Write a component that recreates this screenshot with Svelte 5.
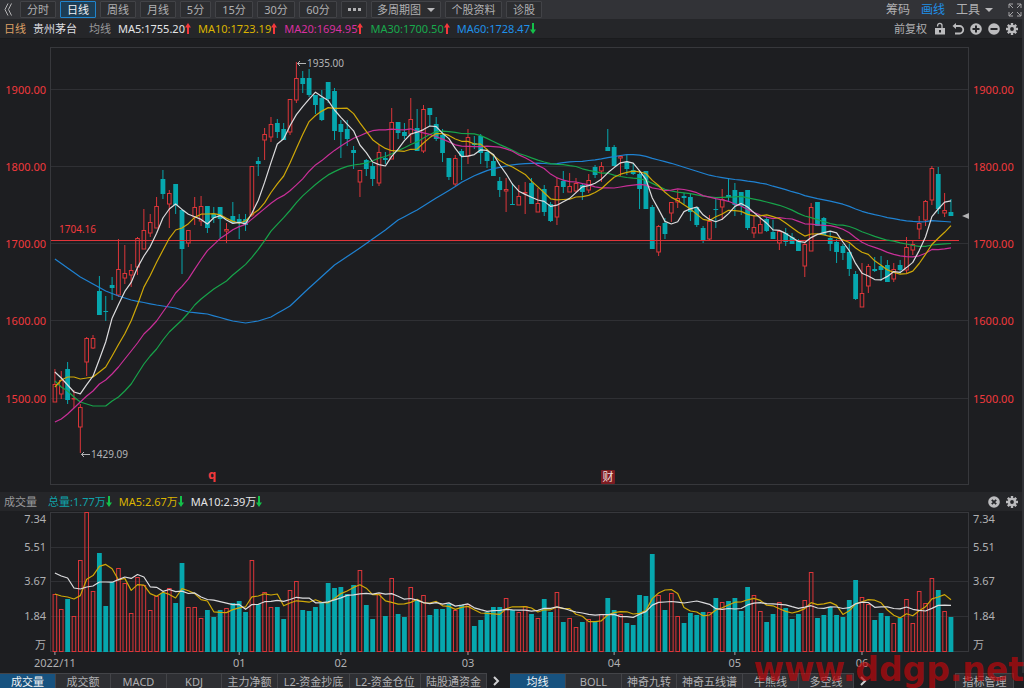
<script>
  const periods = ['分时', '日线', '周线', '月线', '5分', '15分', '30分', '60分'];
  let period = $state('日线');
  let volumeTab = $state('成交量');
  let priceTab = $state('均线');

  const averages = [
    { text: 'MA5:1755.20', color: '#e4e4e6', up: true },
    { text: 'MA10:1723.19', color: '#dbb400', up: true },
    { text: 'MA20:1694.95', color: '#d930a0', up: true },
    { text: 'MA30:1700.50', color: '#18a94c', up: true },
    { text: 'MA60:1728.47', color: '#2090e8', up: false }
  ];
  const volumeLegend = [
    { text: '总量:1.77万', color: '#0fa3ab' },
    { text: 'MA5:2.67万', color: '#dbb400' },
    { text: 'MA10:2.39万', color: '#e4e4e6' }
  ];
  const volumeTabs = [
    ['成交量', 56], ['成交额', 55], ['MACD', 56], ['KDJ', 55], ['主力净额', 56],
    ['L2-资金抄底', 72], ['L2-资金仓位', 71], ['陆股通资金', 66]
  ];
  const priceTabs = [
    ['均线', 56], ['BOLL', 56], ['神奇九转', 55], ['神奇五线谱', 66], ['牛熊线', 56], ['多空线', 55]
  ];

  // One candle per entry: direction, body top, body bottom, high, low, volume top
  const raw = `r384 402 369 402 594,r380 394 371 399 609,t369 400 362 404 599,r398 399 390 408 616,r407 427 404 453 560,
r338 362 337 376 512,r338 348 335 349 591,t291 315 276 315 553,t311 312 296 321 606,t285 288 277 300 582,
r269 295 239 297 568,r273 278 245 284 583,r270 275 264 287 613,r238 267 237 275 577,r230 249 209 249 585,
r222 233 214 237 610,r206 228 197 228 596,t179 194 170 199 593,r193 204 190 228 588,t184 205 184 214 603,
t210 249 209 274 563,r230 243 230 247 607,r207 217 197 225 607,r206 221 196 226 618,t206 228 206 233 610,
t214 218 207 223 617,t207 219 207 238 610,r229 231 223 243 608,t216 223 202 223 603,t219 223 214 239 601,
t219 225 214 231 612,r166 215 166 217 560,t161 164 157 176 604,r134 140 128 160 592,r124 137 117 142 607,
t123 132 119 138 607,t129 140 123 140 619,r99 132 99 135 590,r78 100 62 103 581,t78 84 71 93 610,
t78 95 69 97 611,t95 105 95 114 607,t98 120 90 121 603,t82 99 82 103 583,t91 131 88 140 588,
t124 132 120 158 587,t129 139 120 146 594,t150 153 146 169 585,r170 182 170 197 570,t160 169 159 176 605,
t166 179 163 186 619,r152 183 144 186 594,t158 160 152 164 616,r122 159 108 159 578,t122 133 122 139 614,
t132 136 123 139 617,r119 134 98 143 587,t128 151 109 151 601,r109 151 105 153 595,t108 115 108 126 615,
t124 139 117 141 609,t135 153 129 162 609,t158 177 158 180 604,r158 184 155 186 610,t151 156 149 180 605,
r137 156 129 164 604,t143 145 136 149 626,t136 153 134 164 620,t152 161 149 168 612,t161 176 155 176 607,
t181 190 177 197 607,r189 191 178 212 598,t204 205 183 205 610,r196 205 185 205 612,r192 193 182 214 606,
t183 204 178 204 614,r203 212 188 212 618,t189 212 185 216 599,t204 221 202 222 612,r186 217 177 225 592,
t181 187 171 193 622,r186 192 173 192 618,r183 191 178 193 627,t185 192 183 200 622,r180 190 174 193 619,
t167 175 165 178 622,r166 171 162 182 614,t147 151 129 151 598,t147 166 145 166 610,r156 158 155 176 614,
t162 169 155 175 623,t170 174 163 175 625,t174 189 172 209 595,t171 209 171 209 596,t207 249 205 249 554,
r226 252 225 256 595,t223 234 218 239 610,r202 213 202 222 593,r198 202 190 208 616,t196 198 193 204 623,
t197 212 193 221 613,t207 225 207 227 615,t228 241 226 243 612,r221 239 215 241 612,t209 210 199 228 598,
r199 207 189 220 602,t195 197 178 201 601,t190 205 183 216 598,t192 206 192 215 611,t190 228 190 230 587,
r227 233 215 238 595,r224 233 217 233 611,t219 231 217 232 622,t232 239 220 239 614,r231 243 231 250 602,
t233 242 228 246 608,t237 244 233 244 619,t241 251 239 251 614,r244 266 242 277 600,r207 251 203 251 572,
t202 226 202 226 618,t218 235 217 235 615,t238 244 232 251 607,t242 252 239 263 615,t246 253 244 260 617,
t252 269 244 276 600,t274 299 271 300 580,r293 307 263 307 597,r266 286 264 293 604,t269 271 257 272 620,
t266 270 256 281 613,t265 282 260 282 616,r269 279 263 282 623,t265 270 260 274 618,r247 270 237 273 599,
r244 250 241 255 623,r223 229 216 239 591,r201 220 200 226 603,r168 200 166 205 578,t174 209 167 214 590,
r210 213 193 217 611,t212 216 199 216 617`;

  const candles = raw.split(',').map((entry, i) => {
    const s = entry.trim();
    const [top, bottom, high, low, vol] = s.slice(1).split(' ').map(Number);
    const up = s[0] === 'r';
    return { x: 54.9 + i * 6.355, up, top, bottom, high, low, vol, close: up ? top : bottom };
  });

  // Averages that need sessions older than the first candle start from known values
  function average(key, n, seed) {
    return candles
      .map((c, i) => {
        if (i < seed.length) return [c.x, seed[i]];
        let sum = 0;
        for (let k = i - n + 1; k <= i; k++) sum += candles[k][key];
        return [c.x, sum / n];
      })
      .map((p) => p[0].toFixed(1) + ',' + p[1].toFixed(1))
      .join(' ');
  }

  function interpolate(knots) {
    const out = [];
    for (let k = 0; k < knots.length - 1; k++) {
      const [a, ya] = knots[k];
      const [b, yb] = knots[k + 1];
      for (let i = a; i < b; i++) out.push(ya + ((yb - ya) * (i - a)) / (b - a));
    }
    return out;
  }

  const seed20 = [422, 419, 414, 408, 402, 396, 391, 384, 380, 374, 367, 359, 351, 343, 334, 328, 321, 312, 303];
  const seed30 = [381, 387, 391, 397, 402, 404, 406, 406, 406, 401, 397, 391, 384, 374, 364, 356, 349, 340, 332, 326, 320, 313, 305, 299, 294, 289, 285, 281, 275];
  const seed60 = interpolate([[0, 259], [4, 277], [8, 291], [10, 296], [12, 300], [16, 305], [19, 308], [21, 312], [24, 314], [28, 321], [30, 323], [32, 321], [34, 317], [37, 306], [40, 288], [44, 265], [48, 248], [52, 230], [54, 220], [57, 210], [59, 202]]);

  const priceLines = [
    { color: '#1f82d2', points: average('close', 60, seed60) },
    { color: '#17a34a', points: average('close', 30, seed30) },
    { color: '#c92f98', points: average('close', 20, seed20) },
    { color: '#cfa808', points: average('close', 10, [387, 380, 377, 377, 379, 378, 377, 372, 367]) },
    { color: '#dcdcde', points: average('close', 5, [372, 378, 385, 392]) }
  ];
  const volumeLines = [
    { color: '#cfa808', points: average('vol', 5, [594, 596, 597, 599]) },
    { color: '#dcdcde', points: average('vol', 10, [573, 576, 578, 588, 589, 587, 586, 582, 582]) }
  ];

  const priceTicks = [['1900.00', 90], ['1800.00', 167], ['1700.00', 244], ['1600.00', 321], ['1500.00', 399]];
  const volumeTicks = [['7.34', 519], ['5.51', 547], ['3.67', 581], ['1.84', 616], ['万', 645]];
  const months = [['2022/11', 0], ['01', 29], ['02', 45], ['03', 65], ['04', 88], ['05', 107], ['06', 127]];
</script>

{#snippet arrow(up)}
  <svg class="arrow" viewBox="0 0 6 12" aria-hidden="true">
    {#if up}
      <path d="M3 0 6 4.500H4V11H2V4.500H0Z" fill="#f5383c" />
    {:else}
      <path d="M3 11 6 6.500H4V0H2V6.500H0Z" fill="#14c04a" />
    {/if}
  </svg>
{/snippet}

{#snippet gear()}
  <svg viewBox="0 0 14 14" aria-hidden="true">
    <g stroke="#bcbcbe" stroke-width="2.4">
      <path d="M7 1V13M1 7H13M2.800 2.800 11.200 11.200M11.200 2.800 2.800 11.200" />
    </g>
    <circle cx="7" cy="7" r="4.200" fill="#bcbcbe" />
    <circle cx="7" cy="7" r="1.900" fill="#252629" />
  </svg>
{/snippet}

{#snippet tabs(items, current, choose)}
  {#each items as [name, width]}
    <button class="tab" class:active={current === name} style="flex-basis:{width}px" onclick={() => choose(name)}>{name}</button>
  {/each}
{/snippet}

<div class="app">
  <header class="toolbar">
    <button class="plain back" aria-label="收起">
      <svg viewBox="0 0 8 13" aria-hidden="true"><path d="M4 .5 1 6.500 4 12.500M7.500 .5 4.500 6.500 7.500 12.500" fill="none" stroke="#b4b4b6" /></svg>
    </button>
    <nav class="periods">
      {#each periods as name, i}
        <button class="chip" class:mid={i === 4} class:wide={i > 4} class:active={period === name} onclick={() => (period = name)}>{name}</button>
      {/each}
      <button class="chip dots" aria-label="更多周期"><i></i><i></i><i></i></button>
      <button class="chip multi">多周期图<span class="caret"></span></button>
      <button class="chip info">个股资料</button>
      <button class="chip">诊股</button>
    </nav>
    <nav class="tools">
      <button class="plain">筹码</button>
      <button class="plain blue">画线</button>
      <button class="plain">工具<span class="caret"></span></button>
      <button class="plain" aria-label="全屏">
        <svg class="expand" viewBox="0 0 14 14" aria-hidden="true">
          <path d="M1 5V1H5M1 1 5 5M9 1H13V5M13 1 9 5M1 9V13H5M1 13 5 9M13 9V13H9M13 13 9 9" fill="none" stroke="#a4a4a6" />
        </svg>
      </button>
    </nav>
  </header>

  <main class="workspace">
    <div class="legend price-legend">
      <span class="kind">日线</span>
      <span class="stock">贵州茅台</span>
      <span class="muted">均线</span>
      <div class="values">
        {#each averages as a}
          <span class="value" style="color:{a.color}">{a.text}{@render arrow(a.up)}</span>
        {/each}
      </div>
      <div class="actions">
        <button class="plain adjust">前复权</button>
        <button class="plain icon" aria-label="锁定">
          <svg viewBox="0 0 14 14" aria-hidden="true">
            <rect x="2" y="6" width="10" height="6.500" fill="#bcbcbe" />
            <path d="M4.600 4.500V3.500A2.200 2.200 0 0 1 9 3.500V6" fill="none" stroke="#bcbcbe" stroke-width="1.300" />
            <rect x="6" y="8" width="2" height="2.500" fill="#252629" />
          </svg>
        </button>
        <button class="plain icon" aria-label="撤销">
          <svg viewBox="0 0 14 14" aria-hidden="true">
            <path d="M3 4H8.500A3.500 3.500 0 0 1 8.500 11.500H4" fill="none" stroke="#bcbcbe" stroke-width="1.800" />
            <path d="M1.500 4 5 1V7Z" fill="#bcbcbe" />
          </svg>
        </button>
        <button class="plain icon" aria-label="放大">
          <svg viewBox="0 0 14 14" aria-hidden="true"><circle cx="7" cy="7" r="5.800" fill="#bcbcbe" /><path d="M3.500 7H10.500M7 3.500V10.500" stroke="#252629" stroke-width="2" /></svg>
        </button>
        <button class="plain icon" aria-label="缩小">
          <svg viewBox="0 0 14 14" aria-hidden="true"><circle cx="7" cy="7" r="5.800" fill="#bcbcbe" /><path d="M3.500 7H10.500" stroke="#252629" stroke-width="2" /></svg>
        </button>
        <button class="plain icon" aria-label="主图设置">{@render gear()}</button>
      </div>
    </div>

    <svg class="chart" viewBox="0 39 1022 453" role="img" aria-label="贵州茅台日线">
      <g class="grid">
        {#each priceTicks as [, y]}
          <path d="M51 {y - 0.5}H969" />
        {/each}
      </g>
      <rect class="frame" x="50.500" y="47.500" width="918" height="437" />
      <g class="price-axis">
        {#each priceTicks as [label, y]}
          <text x="46" y={y + 4} text-anchor="end">{label}</text>
          <text x="973" y={y + 4}>{label}</text>
        {/each}
        <text class="level" x="59" y="233">1704.16</text>
      </g>
      {#each candles as c}
        {#if c.up}
          <path class="up" d="M{c.x} {c.high}V{c.top}M{c.x} {c.bottom}V{c.low}" />
          <rect class="up" x={c.x - 1.8} y={c.top + 0.5} width="3.600" height={Math.max(c.bottom - c.top - 0.5, 0.5)} />
        {:else}
          <path class="down" d="M{c.x} {c.high}V{c.low}" />
          <rect class="down-body" x={c.x - 2.4} y={c.top} width="4.800" height={c.bottom - c.top} />
        {/if}
      {/each}
      <path d="M51 240.500H959" stroke="#e0353a" stroke-width="1.200" />
      {#each priceLines as line}
        <polyline points={line.points} stroke={line.color} />
      {/each}
      <g class="mark">
        <path d="M297.500 63.500H306M300 61 297.500 63.500 300 66M81.500 454.500H90M84 452 81.500 454.500 84 457" />
        <text x="307" y="67">1935.00</text>
        <text x="91" y="458">1429.09</text>
      </g>
      <path d="M962 216 969 213V219Z" fill="#b0b0b2" />
      <text class="event" x="208" y="479">q</text>
      <rect x="601" y="470" width="14" height="14" rx="1" fill="#7c1c22" />
      <text class="badge" x="608" y="481" text-anchor="middle">财</text>
    </svg>

    <div class="legend">
      <span class="muted title">成交量</span>
      <div class="values">
        {#each volumeLegend as v}
          <span class="value" style="color:{v.color}">{v.text}{@render arrow(false)}</span>
        {/each}
      </div>
      <div class="actions">
        <button class="plain icon" aria-label="关闭">
          <svg viewBox="0 0 14 14" aria-hidden="true"><circle cx="7" cy="7" r="5.800" fill="#bcbcbe" /><path d="M4.800 4.800 9.200 9.200M9.200 4.800 4.800 9.200" stroke="#252629" stroke-width="1.800" /></svg>
        </button>
        <button class="plain icon" aria-label="副图设置">{@render gear()}</button>
      </div>
    </div>

    <svg class="chart" viewBox="0 511 1022 162" role="img" aria-label="成交量">
      <g class="grid"><path d="M51 547.500H969M51 581.500H969M51 616.500H969" /></g>
      <rect class="frame" x="50.500" y="512.500" width="918" height="139" />
      {#each candles as c}
        {#if c.up}
          <rect class="up" x={c.x - 1.8} y={c.vol + 0.5} width="3.600" height={651 - c.vol} />
        {:else}
          <rect class="down-body" x={c.x - 2.4} y={c.vol} width="4.800" height={652 - c.vol} />
        {/if}
      {/each}
      {#each volumeLines as line}
        <polyline points={line.points} stroke={line.color} />
      {/each}
      <g class="axis">
        {#each volumeTicks as [label, y]}
          <text x="46" y={y + 4} text-anchor="end">{label}</text>
          <text x="973" y={y + 4}>{label}</text>
        {/each}
        {#each months as [label, i]}
          <path d="M{candles[i].x} 652V655" stroke="#a4a4a6" />
          <text x={candles[i].x} y="667" text-anchor="middle">{label}</text>
        {/each}
      </g>
    </svg>
  </main>

  <footer class="tabbar">
    {@render tabs(volumeTabs, volumeTab, (name) => (volumeTab = name))}
    <button class="plain next" aria-label="更多副图指标"><svg viewBox="0 0 8 10" aria-hidden="true"><path d="M2 1 6 5 2 9" /></svg></button>
    {@render tabs(priceTabs, priceTab, (name) => (priceTab = name))}
    <button class="plain next" aria-label="更多主图指标"><svg viewBox="0 0 8 10" aria-hidden="true"><path d="M2 1 6 5 2 9" /></svg></button>
    <button class="tab manage">指标管理</button>
  </footer>
  <div class="watermark">www.ddgp.net</div>
</div>

<style>
  :global(body) {
    background: #1d1e21;
  }
  .app {
    position: relative;
    overflow: hidden;
    background: #1d1e21;
    color: #b0b0b2;
    font: 11px/15px 'Noto Sans', 'Noto Sans CJK SC', sans-serif;
  }
  button {
    box-sizing: border-box;
    margin: 0;
    padding: 0;
    border: 0;
    background: none;
    color: inherit;
    font: inherit;
    white-space: nowrap;
    cursor: pointer;
  }
  svg {
    display: block;
  }
  .plain {
    display: flex;
    align-items: center;
  }
  .toolbar {
    display: flex;
    align-items: center;
    height: 19px;
    background: #323337;
  }
  .back {
    padding: 0 8px 0 4px;
  }
  .back svg {
    width: 8px;
    height: 13px;
  }
  .periods {
    display: flex;
    gap: 4px;
  }
  .chip {
    display: flex;
    align-items: center;
    justify-content: center;
    width: 36px;
    height: 17px;
    border: 1px solid #424347;
    border-radius: 1px;
    background: #2c2d30;
  }
  .chip.mid {
    width: 31px;
  }
  .chip.wide {
    width: 38px;
  }
  .chip.active {
    border-color: #2084cc;
    background: #1d3d54;
    color: #f0f0f2;
  }
  .chip.dots {
    width: 26px;
    gap: 2px;
  }
  .dots i {
    width: 3px;
    height: 3px;
    background: #b0b0b2;
  }
  .chip.multi {
    width: 70px;
    gap: 6px;
  }
  .chip.info {
    width: 57px;
  }
  .caret {
    border: 4px solid transparent;
    border-top-color: #b8b8ba;
    border-bottom: 0;
  }
  .tools {
    display: flex;
    gap: 11px;
    margin-left: auto;
    padding-right: 2px;
    font-size: 12px;
  }
  .tools .caret {
    margin-left: 5px;
  }
  .expand {
    width: 14px;
    height: 14px;
    margin-left: 4px;
  }
  .blue {
    color: #2090e8;
  }
  .workspace {
    border-right: 2px solid #303135;
  }
  .legend {
    display: flex;
    align-items: center;
    gap: 7px;
    height: 19px;
    padding: 0 3px 0 4px;
    background: #252629;
  }
  .price-legend {
    border-bottom: 1px solid #1a1b1d;
  }
  .kind {
    color: #dca066;
  }
  .stock {
    color: #dedee0;
  }
  .muted {
    color: #9a9a9c;
  }
  .stock + .muted {
    margin-left: 5px;
  }
  .title {
    margin-right: 4px;
  }
  .values {
    display: flex;
    gap: 7px;
  }
  .value {
    display: flex;
    align-items: center;
  }
  .arrow {
    width: 6px;
    height: 12px;
  }
  .actions {
    display: flex;
    align-items: center;
    gap: 4px;
    margin-left: auto;
  }
  .adjust {
    margin-right: 2px;
  }
  .icon svg {
    width: 14px;
    height: 14px;
  }
  .chart {
    width: 100%;
    height: auto;
  }
  .grid path {
    stroke: #2f3034;
  }
  .frame {
    fill: none;
    stroke: #37383c;
  }
  .up {
    fill: none;
    stroke: #dc3539;
  }
  .down {
    stroke: #06a7ae;
  }
  .down-body {
    fill: #06a7ae;
  }
  polyline {
    fill: none;
    stroke-width: 1.2px;
    stroke-linejoin: round;
  }
  .price-axis text {
    fill: #f0393d;
    font-size: 11px;
  }
  .price-axis .level {
    font-size: 10px;
  }
  .axis text {
    fill: #b0b0b2;
    font-size: 11px;
  }
  .mark text {
    fill: #b4b4b6;
    font-size: 10px;
  }
  .mark path {
    fill: none;
    stroke: #b4b4b6;
  }
  .event {
    fill: #f0393d;
    font-size: 13px;
    font-weight: 700;
  }
  .badge {
    fill: #f2dede;
    font-size: 11px;
  }
  .tabbar {
    display: flex;
    height: 15px;
    overflow: hidden;
  }
  .tab {
    flex: 0 0 auto;
    height: 16px;
    border: 1px solid #434448;
    border-width: 1px 1px 0 0;
    background: #2e2f33;
    line-height: 15px;
  }
  .tab.active {
    background: #17527f;
    color: #f2f2f4;
  }
  .next {
    flex: 0 0 23px;
    justify-content: center;
    padding-right: 6px;
  }
  .next svg {
    width: 8px;
    height: 10px;
  }
  .next path {
    fill: none;
    stroke: #d0d0d2;
    stroke-width: 2px;
  }
  .manage {
    margin-left: auto;
    margin-right: 10px;
    width: 59px;
    border-left-width: 1px;
  }
  .watermark {
    position: absolute;
    right: 0;
    bottom: 0;
    color: rgba(190, 8, 12, 0.7);
    font: 700 33px/37px 'DejaVu Sans', sans-serif;
    pointer-events: none;
  }
</style>
